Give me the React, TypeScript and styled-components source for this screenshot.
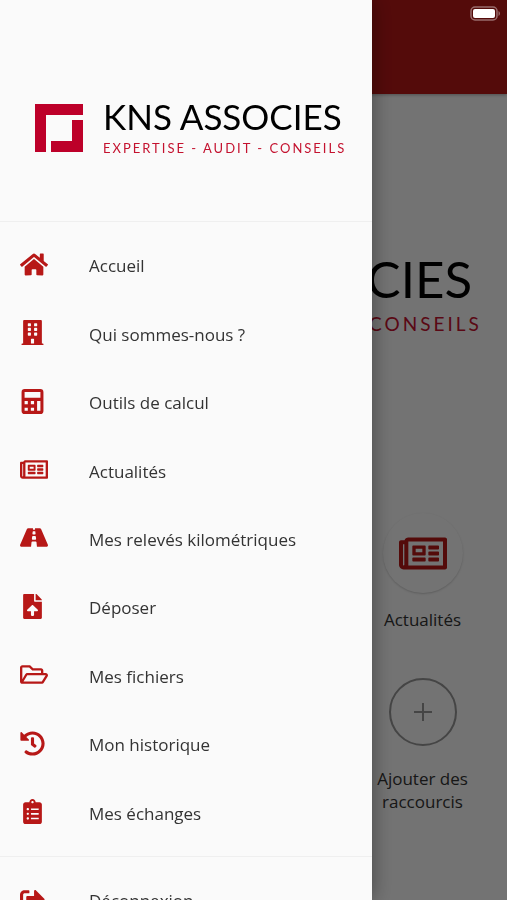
import React from "react";
import styled, { createGlobalStyle } from "styled-components";
import type { IconType } from "react-icons";
import {
  FaBuilding,
  FaClipboardList,
  FaFileUpload,
  FaHistory,
  FaHome,
  FaRegFolderOpen,
  FaRegNewspaper,
  FaRoad,
  FaSignOutAlt,
} from "react-icons/fa";

const GlobalStyle = createGlobalStyle`
  *, *::before, *::after { box-sizing: border-box; }
  body {
    margin: 0;
    background: #fafafa;
    color: #333;
    font-family: "Open Sans", "Noto Sans", sans-serif;
    overflow: hidden;
  }
  button { font: inherit; color: inherit; }
`;

const Screen = styled.div`
  height: 100vh;
  overflow: hidden;
`;

const Page = styled.main`
  display: flex;
  flex-direction: column;
`;

const AppBar = styled.header`
  height: 94px;
  background: #b71817;
  box-shadow: 0 1px 3px rgba(0, 0, 0, 0.3);
`;

const Hero = styled.section`
  display: flex;
  justify-content: center;
  padding: 162px 0 177px;
`;

const Shortcuts = styled.section`
  display: grid;
  grid-template-columns: repeat(3, 1fr);
  row-gap: 47px;
`;

const Shortcut = styled.button`
  grid-column: 3;
  display: flex;
  flex-direction: column;
  align-items: center;
  gap: 15px;
  padding: 0 36px;
  border: 0;
  background: none;
  font-size: 17px;
  line-height: 23px;
  text-align: center;
`;

const Disc = styled.span<{ $outlined?: boolean }>`
  display: grid;
  place-items: center;
  width: ${(p) => (p.$outlined ? 68 : 80)}px;
  height: ${(p) => (p.$outlined ? 68 : 80)}px;
  margin-bottom: ${(p) => (p.$outlined ? 6 : 0)}px;
  border: ${(p) => (p.$outlined ? "2px solid #969696" : "0")};
  border-radius: 50%;
  color: ${(p) => (p.$outlined ? "#969696" : "#b71817")};
  box-shadow: ${(p) => (p.$outlined ? "none" : "0 1px 2px rgba(0, 0, 0, 0.18)")};

  svg {
    width: ${(p) => (p.$outlined ? 18 : 48)}px;
    height: ${(p) => (p.$outlined ? 18 : 43)}px;
  }
`;

const ShortcutLabel = styled.span`
  margin: 0 -12px;
`;

const Brand = styled.div<{ $large?: boolean }>`
  display: flex;
  align-items: center;
  gap: ${(p) => (p.$large ? 29 : 20)}px;
  white-space: nowrap;

  svg {
    flex: none;
    width: ${(p) => (p.$large ? 70 : 48)}px;
    height: ${(p) => (p.$large ? 70 : 48)}px;
  }
`;

const BrandText = styled.div`
  display: flex;
  flex-direction: column;
  font-family: Lato, sans-serif;
`;

const BrandName = styled.span<{ $large?: boolean }>`
  color: #000;
  font-size: ${(p) => (p.$large ? 51 : 35)}px;
  line-height: ${(p) => (p.$large ? 46 : 32)}px;
`;

const BrandTagline = styled.span<{ $large?: boolean }>`
  color: #c4122f;
  font-size: ${(p) => (p.$large ? 19 : 13)}px;
  line-height: ${(p) => (p.$large ? 24 : 16)}px;
  margin-top: ${(p) => (p.$large ? 10 : 8)}px;
  letter-spacing: ${(p) => (p.$large ? 3 : 2)}px;
`;

const Backdrop = styled.div`
  position: fixed;
  inset: 0;
  background: rgba(0, 0, 0, 0.54);
`;

const Drawer = styled.aside`
  position: fixed;
  inset: 0 auto 0 0;
  width: min(372px, 84vw);
  overflow: hidden;
  background: #fafafa;
  box-shadow: 0 0 20px rgba(0, 0, 0, 0.4);
`;

const DrawerHead = styled.div`
  display: flex;
  align-items: center;
  height: 222px;
  padding: 35px 24px 0 35px;
  border-bottom: 1px solid #efefef;
`;

const Menu = styled.nav`
  display: grid;
  grid-auto-rows: 1fr;
  height: 634px;
  padding: 10px 0 8px;
`;

const MenuFooter = styled.div`
  padding-top: 10px;
  border-top: 1px solid #efefef;
`;

const MenuItem = styled.a`
  display: flex;
  align-items: center;
  min-height: 68px;
  padding: 0 20px;
  color: #333;
  font-size: 17px;
  line-height: 24px;
  text-decoration: none;
`;

const IconSlot = styled.span`
  display: flex;
  width: 69px;
  padding-bottom: 4px;
  color: #b71817;
`;

const IconBox = styled.span<{ $wide?: boolean }>`
  display: flex;

  svg {
    flex: none;
    width: ${(p) => (p.$wide ? 28 : 25)}px;
    height: 25px;
  }
`;

const StatusBar = styled.div`
  position: fixed;
  inset: 0 0 auto 0;
  display: flex;
  justify-content: flex-end;
  padding: 6px 6px 0 0;
`;

function Calculator() {
  return (
    <svg viewBox="0 0 448 512" fill="currentColor" aria-hidden="true">
      <path
        fillRule="evenodd"
        d="M64 0h320a64 64 0 0 1 64 64v384a64 64 0 0 1-64 64H64a64 64 0 0 1-64-64V64A64 64 0 0 1 64 0zM62 62v118h324V62zM62 248v62h66v-62zM190 248v62h66v-62zM62 382v62h66v-62zM190 382v62h66v-62zM318 248v196h68V248z"
      />
    </svg>
  );
}

function Plus() {
  return (
    <svg viewBox="0 0 18 18" fill="none" stroke="currentColor" strokeWidth="2" aria-hidden="true">
      <path d="M9 0v18M0 9h18" />
    </svg>
  );
}

function Battery() {
  return (
    <svg width="31" height="15" viewBox="0 0 31 15" fill="none" role="img" aria-label="Batterie">
      <rect x="1" y="1" width="26" height="13" rx="4" stroke="#fff" strokeOpacity="0.4" strokeWidth="1.5" />
      <rect x="3" y="3" width="22" height="9" rx="2" fill="#fff" />
      <path d="M28.500 5c2 1 2 4 0 5z" fill="#fff" fillOpacity="0.4" />
    </svg>
  );
}

function Logo({ large }: { large?: boolean }) {
  return (
    <Brand $large={large}>
      <svg viewBox="0 0 48 48" fill="#bd0029" aria-hidden="true">
        <path d="M0 0h48v11H11v37H0z" />
        <path d="M37 16h11v32H16V37h21z" />
      </svg>
      <BrandText>
        <BrandName $large={large}>KNS ASSOCIES</BrandName>
        <BrandTagline $large={large}>EXPERTISE - AUDIT - CONSEILS</BrandTagline>
      </BrandText>
    </Brand>
  );
}

type Entry = {
  label: string;
  href: string;
  icon: IconType | typeof Calculator;
  wide?: boolean;
};

const entries: Entry[] = [
  { label: "Accueil", href: "#accueil", icon: FaHome, wide: true },
  { label: "Qui sommes-nous ?", href: "#qui-sommes-nous", icon: FaBuilding },
  { label: "Outils de calcul", href: "#outils", icon: Calculator },
  { label: "Actualités", href: "#actualites", icon: FaRegNewspaper, wide: true },
  { label: "Mes relevés kilométriques", href: "#releves", icon: FaRoad, wide: true },
  { label: "Déposer", href: "#deposer", icon: FaFileUpload },
  { label: "Mes fichiers", href: "#fichiers", icon: FaRegFolderOpen, wide: true },
  { label: "Mon historique", href: "#historique", icon: FaHistory },
  { label: "Mes échanges", href: "#echanges", icon: FaClipboardList },
];

function MenuLink({ label, href, icon: Icon, wide }: Entry) {
  return (
    <MenuItem href={href}>
      <IconSlot>
        <IconBox $wide={wide}>
          <Icon />
        </IconBox>
      </IconSlot>
      {label}
    </MenuItem>
  );
}

export default function App() {
  return (
    <Screen>
      <GlobalStyle />
      <Page>
        <AppBar />
        <Hero>
          <Logo large />
        </Hero>
        <Shortcuts>
          <Shortcut type="button">
            <Disc>
              <FaRegNewspaper />
            </Disc>
            <ShortcutLabel>Actualités</ShortcutLabel>
          </Shortcut>
          <Shortcut type="button">
            <Disc $outlined>
              <Plus />
            </Disc>
            <ShortcutLabel>Ajouter des raccourcis</ShortcutLabel>
          </Shortcut>
        </Shortcuts>
      </Page>
      <Backdrop />
      <Drawer>
        <DrawerHead>
          <Logo />
        </DrawerHead>
        <Menu>
          {entries.map((entry) => (
            <MenuLink key={entry.href} {...entry} />
          ))}
        </Menu>
        <MenuFooter>
          <MenuLink label="Déconnexion" href="#deconnexion" icon={FaSignOutAlt} />
        </MenuFooter>
      </Drawer>
      <StatusBar>
        <Battery />
      </StatusBar>
    </Screen>
  );
}
